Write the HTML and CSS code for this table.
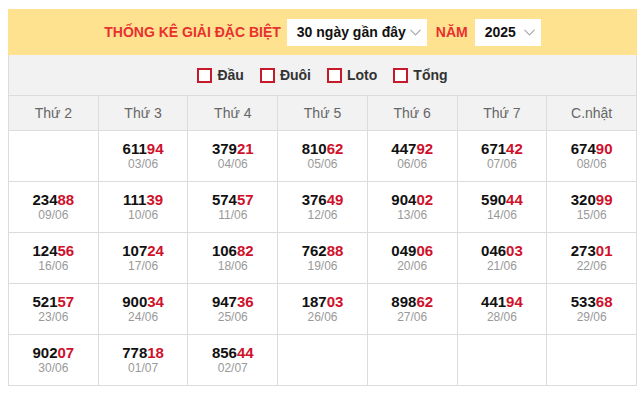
FILE: index.html
```html
<!DOCTYPE html>
<html lang="vi">
<head>
<meta charset="utf-8">
<link rel="stylesheet" href="styles.css">
</head>
<body>
<div class="box">
  <div class="topbar">
    <span class="title">THỐNG KÊ GIẢI ĐẶC BIỆT</span>
    <div class="select wide"><span>30 ngày gần đây</span><svg class="chev" width="11" height="7" viewBox="0 0 11 7"><path d="M0.5 0.8 L5.5 5.8 L10.5 0.8" fill="none" stroke="#aaa" stroke-width="1.2"/></svg></div>
    <span class="title">NĂM</span>
    <div class="select"><span>2025</span><svg class="chev" width="11" height="7" viewBox="0 0 11 7"><path d="M0.5 0.8 L5.5 5.8 L10.5 0.8" fill="none" stroke="#aaa" stroke-width="1.2"/></svg></div>
  </div>
  <div class="grid">
    <div class="opts">
      <label class="opt"><span class="cb"></span>Đầu</label>
      <label class="opt"><span class="cb"></span>Đuôi</label>
      <label class="opt"><span class="cb"></span>Loto</label>
      <label class="opt"><span class="cb"></span>Tổng</label>
    </div>
    <div class="th">Thứ 2</div><div class="th">Thứ 3</div><div class="th">Thứ 4</div><div class="th">Thứ 5</div><div class="th">Thứ 6</div><div class="th">Thứ 7</div><div class="th">C.nhật</div>

    <div class="td"></div>
    <div class="td"><b>611<i>94</i></b><small>03/06</small></div>
    <div class="td"><b>379<i>21</i></b><small>04/06</small></div>
    <div class="td"><b>810<i>62</i></b><small>05/06</small></div>
    <div class="td"><b>447<i>92</i></b><small>06/06</small></div>
    <div class="td"><b>671<i>42</i></b><small>07/06</small></div>
    <div class="td"><b>674<i>90</i></b><small>08/06</small></div>

    <div class="td"><b>234<i>88</i></b><small>09/06</small></div>
    <div class="td"><b>111<i>39</i></b><small>10/06</small></div>
    <div class="td"><b>574<i>57</i></b><small>11/06</small></div>
    <div class="td"><b>376<i>49</i></b><small>12/06</small></div>
    <div class="td"><b>904<i>02</i></b><small>13/06</small></div>
    <div class="td"><b>590<i>44</i></b><small>14/06</small></div>
    <div class="td"><b>320<i>99</i></b><small>15/06</small></div>

    <div class="td"><b>124<i>56</i></b><small>16/06</small></div>
    <div class="td"><b>107<i>24</i></b><small>17/06</small></div>
    <div class="td"><b>106<i>82</i></b><small>18/06</small></div>
    <div class="td"><b>762<i>88</i></b><small>19/06</small></div>
    <div class="td"><b>049<i>06</i></b><small>20/06</small></div>
    <div class="td"><b>046<i>03</i></b><small>21/06</small></div>
    <div class="td"><b>273<i>01</i></b><small>22/06</small></div>

    <div class="td"><b>521<i>57</i></b><small>23/06</small></div>
    <div class="td"><b>900<i>34</i></b><small>24/06</small></div>
    <div class="td"><b>947<i>36</i></b><small>25/06</small></div>
    <div class="td"><b>187<i>03</i></b><small>26/06</small></div>
    <div class="td"><b>898<i>62</i></b><small>27/06</small></div>
    <div class="td"><b>441<i>94</i></b><small>28/06</small></div>
    <div class="td"><b>533<i>68</i></b><small>29/06</small></div>

    <div class="td"><b>902<i>07</i></b><small>30/06</small></div>
    <div class="td"><b>778<i>18</i></b><small>01/07</small></div>
    <div class="td"><b>856<i>44</i></b><small>02/07</small></div>
    <div class="td"></div>
    <div class="td"></div>
    <div class="td"></div>
    <div class="td"></div>
  </div>
</div>
</body>
</html>
```

FILE: styles.css
```css
html, body {
  margin: 0;
  padding: 0;
  background: #fff;
}
body {
  padding: 9px 0 0 8px;
  font-family: "Liberation Sans", Arial, sans-serif;
}
.box {
  width: 629px;
}
.topbar {
  height: 46px;
  background: #fee28f;
  display: flex;
  align-items: center;
  justify-content: center;
}
.title {
  color: #e8302f;
  font-weight: bold;
  font-size: 14px;
}
.select {
  height: 27px;
  background: #fff;
  display: flex;
  align-items: center;
  justify-content: space-between;
  box-sizing: border-box;
  padding: 0 6px 0 10px;
  margin: 0 9px 0 6px;
  font-weight: bold;
  font-size: 14px;
  color: #111;
  width: 66px;
}
.select.wide {
  width: 140px;
}
.select:last-child {
  margin: 0 0 0 7px;
}
.chev {
  display: block;
  margin-top: 1px;
}
.grid {
  display: grid;
  grid-template-columns: repeat(7, 1fr);
  border-left: 1px solid #dcdcdc;
}
.opts {
  grid-column: 1 / -1;
  height: 40px;
  background: #f2f2f2;
  border-right: 1px solid #dcdcdc;
  border-bottom: 1px solid #dcdcdc;
  display: flex;
  align-items: center;
  justify-content: center;
  gap: 16px;
}
.opt {
  display: flex;
  align-items: center;
  gap: 5px;
  font-weight: bold;
  font-size: 14px;
  color: #333;
}
.cb {
  width: 15px;
  height: 15px;
  box-sizing: border-box;
  border: 2px solid #c41a2c;
  background: #fff;
  margin-top: 1px;
}
.th {
  height: 34px;
  background: #f2f2f2;
  border-right: 1px solid #dcdcdc;
  border-bottom: 1px solid #dcdcdc;
  display: flex;
  align-items: center;
  justify-content: center;
  font-size: 14px;
  color: #666;
}
.td {
  height: 50px;
  border-right: 1px solid #dcdcdc;
  border-bottom: 1px solid #dcdcdc;
  display: flex;
  flex-direction: column;
  align-items: center;
  justify-content: center;
}
.td b {
  font-size: 15px;
  font-weight: bold;
  color: #111;
  line-height: 17px;
}
.td i {
  font-style: normal;
  color: #d0112b;
}
.td small {
  font-size: 12px;
  color: #999;
  line-height: 15px;
}
```
